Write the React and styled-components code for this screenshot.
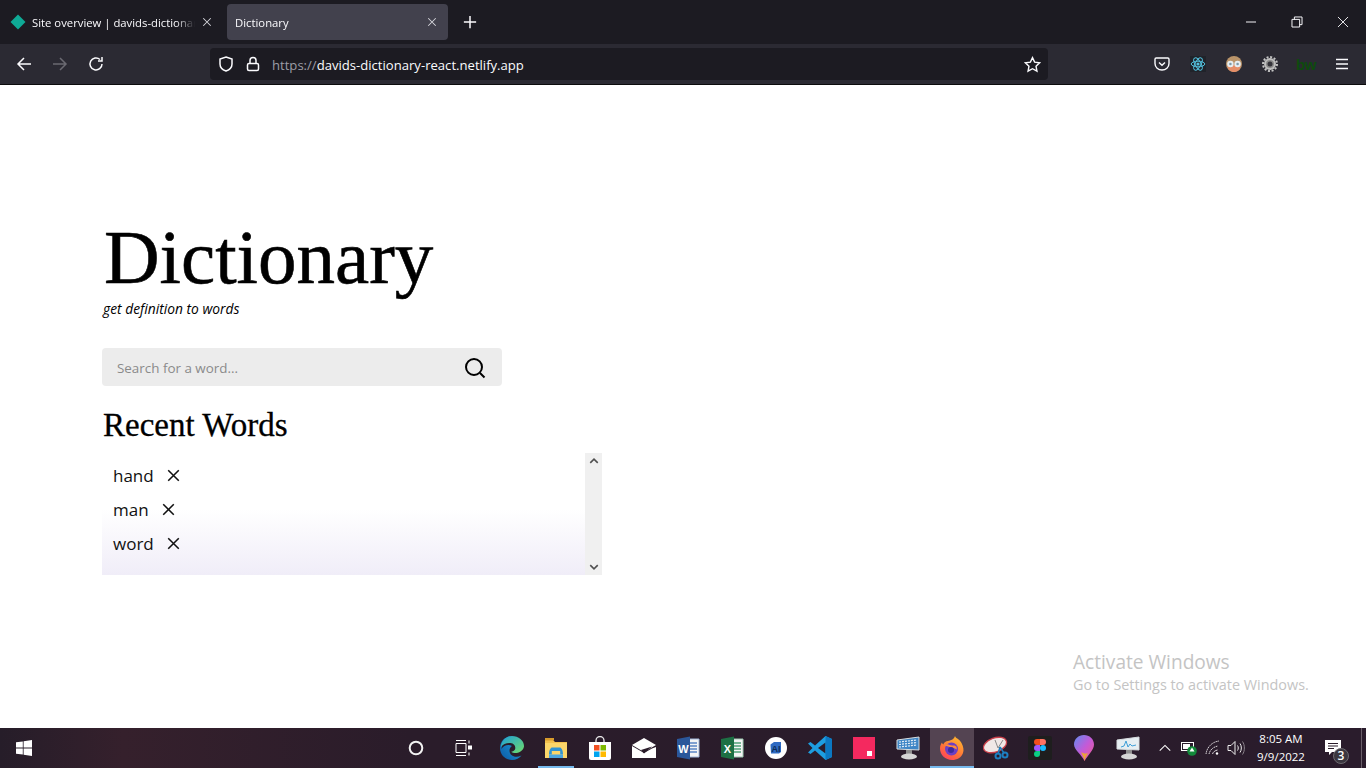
import React from 'react';
import styled, { createGlobalStyle } from 'styled-components';

const GlobalStyle = createGlobalStyle`
  html, body {
    margin: 0;
    padding: 0;
    height: 100%;
    overflow: hidden;
    background: #fff;
    font-family: "Open Sans", "Liberation Sans", sans-serif;
  }
`;

const Page = styled.div`
  width: 1366px;
  height: 768px;
  display: flex;
  flex-direction: column;
  position: relative;
  overflow: hidden;
`;

/* browser chrome */
const TabBar = styled.div`
  height: 44px;
  flex: none;
  background: #1c1b22;
  display: flex;
  align-items: flex-start;
  padding-top: 4px;
  box-sizing: border-box;
`;

const Tab = styled.div`
  width: ${(props) => props.$width}px;
  height: 36px;
  padding: 0 ${(props) => props.$padRight}px 0 ${(props) => props.$padLeft}px;
  box-sizing: border-box;
  display: flex;
  align-items: center;
  gap: 6px;
  border-radius: 4px;
  background: ${(props) => (props.$active ? '#42414d' : 'transparent')};
  color: #fbfbfe;
  font-size: 11.3px;
`;

const TabTitle = styled.span`
  flex: 1;
  overflow: hidden;
  white-space: nowrap;
  -webkit-mask-image: linear-gradient(to right, #000 88%, transparent 100%);
  mask-image: linear-gradient(to right, #000 88%, transparent 100%);
`;

const NewTab = styled.div`
  width: 44px;
  height: 36px;
  display: flex;
  align-items: center;
  justify-content: center;
`;

const WindowControls = styled.div`
  margin-left: auto;
  margin-top: -4px;
  display: flex;
`;

const WindowButton = styled.div`
  width: 46px;
  height: 44px;
  display: flex;
  align-items: center;
  justify-content: center;
`;

const NavBar = styled.div`
  height: 41px;
  flex: none;
  box-sizing: border-box;
  background: #2b2a33;
  border-bottom: 1px solid #0c0c0d;
  display: flex;
  align-items: center;
`;

const NavButton = styled.div`
  width: 36px;
  height: 32px;
  display: flex;
  align-items: center;
  justify-content: center;
  flex: none;
`;

const NavLeft = styled.div`
  display: flex;
  padding-left: 6px;
  width: 210px;
  box-sizing: border-box;
  flex: none;
`;

const UrlBar = styled.div`
  width: 838px;
  height: 32px;
  flex: none;
  background: #1c1b22;
  border-radius: 4px;
  display: flex;
  align-items: center;
  padding: 0 7px 0 8px;
  box-sizing: border-box;
  color: #fbfbfe;
  font-size: 13.1px;
  gap: 11px;
`;

const UrlText = styled.span`
  flex: 1;
  padding-top: 2px;
  white-space: nowrap;
`;

const UrlScheme = styled.span`
  color: #9d9da6;
`;

const NavRight = styled.div`
  margin-left: auto;
  padding-right: 6px;
  display: flex;
`;

const BwBadge = styled.span`
  font-family: "Liberation Sans", sans-serif;
  font-weight: 700;
  font-size: 15px;
  color: #0d4a0d;
  letter-spacing: -0.5px;
`;

/* page content */
const Content = styled.main`
  flex: 1;
  padding: 129px 0 0 102px;
  background: #fff;
  min-height: 0;
`;

const Title = styled.h1`
  margin: 0;
  padding-left: 2px;
  font-family: "Liberation Serif", serif;
  font-weight: 400;
  font-size: 77px;
  line-height: 86px;
  color: #000;
  -webkit-text-stroke: 0.6px #000;
`;

const Tagline = styled.p`
  margin: 0;
  padding-left: 1px;
  font-style: italic;
  font-size: 13.8px;
  line-height: 18px;
  color: #000;
`;

const SearchBox = styled.form`
  margin-top: 30px;
  width: 400px;
  height: 38px;
  background: #ececec;
  border-radius: 4px;
  display: flex;
  align-items: center;
  padding: 0 15px;
  box-sizing: border-box;
`;

const SearchInput = styled.input`
  flex: 1;
  border: 0;
  outline: 0;
  background: transparent;
  font-family: "Open Sans", sans-serif;
  font-size: 13.4px;
  color: #333;
  padding: 1px 0 0;

  &::placeholder {
    color: #8a8a8a;
    opacity: 1;
  }
`;

const SectionTitle = styled.h2`
  margin: 20px 0 0;
  padding-left: 1px;
  font-family: "Liberation Serif", serif;
  font-weight: 400;
  font-size: 33px;
  line-height: 38px;
  color: #000;
  -webkit-text-stroke: 0.3px #000;
`;

const RecentPanel = styled.div`
  margin-top: 9px;
  width: 500px;
  height: 122px;
  display: flex;
  background: linear-gradient(to bottom, #fff 0%, #fff 46%, #f0edf8 100%);
`;

const RecentList = styled.ul`
  flex: 1;
  margin: 0;
  padding: 5px 0 0 11px;
  list-style: none;
`;

const RecentItem = styled.li`
  height: 34px;
  display: flex;
  align-items: center;
  gap: 13px;
  font-size: 17px;
  color: #111;
`;

const Scrollbar = styled.div`
  width: 17px;
  background: #f0f0f0;
  display: flex;
  flex-direction: column;
  justify-content: space-between;
  align-items: center;
  padding: 3px 0;
  box-sizing: border-box;
`;

const ActivateNote = styled.div`
  position: absolute;
  left: 1073px;
  top: 650px;
  color: #c4c4c4;
  font-size: 14.4px;
  line-height: 22px;
`;

const ActivateTitle = styled.div`
  font-size: 19.1px;
  line-height: 24px;
`;

/* windows taskbar */
const Taskbar = styled.footer`
  height: 40px;
  flex: none;
  background: linear-gradient(to right, #261d29 0%, #35202c 9%, #2a1c2a 30%, #2a1c2c 100%);
  display: flex;
  align-items: center;
  color: #fff;
`;

const StartButton = styled.div`
  width: 48px;
  height: 40px;
  display: flex;
  align-items: center;
  justify-content: center;
`;

const TaskIcons = styled.div`
  margin-left: 344px;
  display: flex;
`;

const TaskSlot = styled.div`
  width: ${(props) => props.$width || 44}px;
  height: 40px;
  margin-right: ${(props) => props.$after || 0}px;
  position: relative;
  display: flex;
  align-items: center;
  justify-content: center;
  background: ${(props) => (props.$active ? '#544452' : 'transparent')};

  &::after {
    content: '';
    display: ${(props) => (props.$running ? 'block' : 'none')};
    position: absolute;
    left: ${(props) => (props.$active ? 0 : 4)}px;
    right: ${(props) => (props.$active ? 0 : 4)}px;
    bottom: 0;
    height: 2px;
    background: #76b9ed;
  }
`;

const Tray = styled.div`
  margin-left: auto;
  display: flex;
  align-items: center;
  height: 40px;
`;

const TrayIcon = styled.div`
  width: ${(props) => props.$width}px;
  display: flex;
  justify-content: center;
`;

const Clock = styled.div`
  width: 68px;
  text-align: center;
  font-size: 11.5px;
  line-height: 18px;
  color: #fff;
`;

const NotificationButton = styled.div`
  width: 46px;
  height: 40px;
  padding-left: 10px;
  box-sizing: border-box;
  position: relative;
  display: flex;
  align-items: center;
`;

const NotificationCount = styled.span`
  position: absolute;
  left: 18px;
  top: 20px;
  width: 16px;
  height: 16px;
  border-radius: 50%;
  background: #3b3740;
  border: 1px solid #6d6a70;
  box-sizing: border-box;
  font-size: 12px;
  font-weight: 600;
  line-height: 14px;
  text-align: center;
  color: #fff;
`;

const ShowDesktop = styled.div`
  width: 5px;
  height: 40px;
  border-left: 1px solid #6a5f69;
  box-sizing: border-box;
`;

/* drawings */
const Line = ({ size = 16, d, color = '#fbfbfe', width = 1.5 }) => (
  <svg width={size} height={size} viewBox="0 0 16 16" fill="none" stroke={color} strokeWidth={width} style={{ flex: 'none' }}>
    <path d={d} />
  </svg>
);

const CloseX = ({ color }) => <Line size={12} d="M3 3l10 10M13 3L3 13" color={color || '#d6d6dc'} width={1.4} />;

const Diamond = () => (
  <svg width="16" height="16" viewBox="0 0 16 16" style={{ flex: 'none' }}>
    <path d="M8 .5L15.500 8 8 15.500.5 8z" fill="#0faa96" />
  </svg>
);

const ReactAtom = () => (
  <svg width="16" height="16" viewBox="0 0 16 16" fill="none" stroke="#53c1de" strokeWidth="1">
    <rect width="16" height="16" fill="#20232a" stroke="none" />
    <circle cx="8" cy="8" r="1.600" fill="#53c1de" stroke="none" />
    <ellipse cx="8" cy="8" rx="6.800" ry="2.800" />
    <ellipse cx="8" cy="8" rx="6.800" ry="2.800" transform="rotate(60 8 8)" />
    <ellipse cx="8" cy="8" rx="6.800" ry="2.800" transform="rotate(120 8 8)" />
  </svg>
);

const Avatar = () => (
  <svg width="16" height="16" viewBox="0 0 16 16">
    <circle cx="8" cy="8" r="8" fill="#b9946a" />
    <path d="M1.500 9c0 5 3.500 7 6.500 7s6.500-2 6.500-7z" fill="#e58e68" />
    <circle cx="4.400" cy="8" r="3.200" fill="#e6eef2" />
    <circle cx="11.600" cy="8" r="3.200" fill="#e6eef2" />
    <circle cx="4.400" cy="8" r="1.300" fill="#7d9aa8" />
    <circle cx="11.600" cy="8" r="1.300" fill="#7d9aa8" />
  </svg>
);

const Gear = () => (
  <svg width="16" height="16" viewBox="0 0 16 16">
    <circle cx="8" cy="8" r="7" fill="none" stroke="#c4c4c4" strokeWidth="2" strokeDasharray="2 1.660" />
    <circle cx="8" cy="8" r="6" fill="#bdbdbd" />
    <circle cx="8" cy="8" r="4" fill="#8a8a8a" />
    <circle cx="8" cy="8" r="2.500" fill="#34333a" />
  </svg>
);

const Pocket = () => (
  <svg width="16" height="16" viewBox="0 0 16 16" fill="none" stroke="#fbfbfe" strokeWidth="1.400">
    <path d="M2.200 2h11.600c.7 0 1.200.5 1.200 1.200v4.300c0 3.800-3.200 6.500-7 6.500s-7-2.700-7-6.500V3.200C1 2.500 1.500 2 2.200 2z" />
    <path d="M5 6.500l3 2.800 3-2.800" />
  </svg>
);

const WinLogo = () => (
  <svg width="16" height="16" viewBox="0 0 16 16" fill="#fff">
    <path d="M0 2.300l6.800-.9v6.200H0zM7.600 1.300L16 0v7.600H7.600zM0 8.400h6.800v6.200L0 13.700zM7.600 8.400H16V16l-8.400-1.200z" />
  </svg>
);

const Cortana = () => (
  <svg width="16" height="16" viewBox="0 0 16 16" fill="none">
    <circle cx="8" cy="8" r="6.300" stroke="#f2f2f2" strokeWidth="2" />
  </svg>
);

const TaskView = () => (
  <svg width="18" height="16" viewBox="0 0 18 16" fill="none" stroke="#fff">
    <path d="M1 .5h10M1 15.500h10M1 3.500V12.500h10V3.500zM14 .5v3M14 12.500v3" />
    <rect x="13.500" y="6" width="3" height="3" fill="#fff" />
  </svg>
);

const Edge = () => (
  <svg width="24" height="24" viewBox="0 0 24 24">
    <defs>
      <linearGradient id="edgeA" x1="0" y1="1" x2="1" y2="0">
        <stop offset="0" stopColor="#0c59a4" />
        <stop offset="1" stopColor="#1fa4e0" />
      </linearGradient>
      <linearGradient id="edgeB" x1="0" y1="0" x2="1" y2="1">
        <stop offset="0" stopColor="#1f9fd8" />
        <stop offset="1" stopColor="#6fdc6a" />
      </linearGradient>
    </defs>
    <path d="M12 0C5 0 0 5.500 0 12c0 7 5.500 12 12 12 4 0 7.500-1.800 9.500-4.500-6 3-12 .5-12-5 0-2 1-3.500 2.500-4.500C8 8 3.500 9.500 1.500 13 2 6 7 1.500 12 0z" fill="url(#edgeA)" />
    <path d="M12 0C5.500 0 1 5.500 1 11c2-3 6-4.500 9.500-4 4 .5 5.500 3.500 4.500 6.500-1 2-4 2-3.500 2.500 2 1.500 6 1.500 9-.5 3-2 3.500-4.500 3.500-5.500C24 4.500 18.500 0 12 0z" fill="url(#edgeB)" />
  </svg>
);

const Explorer = () => (
  <svg width="22" height="20" viewBox="0 0 22 20">
    <path d="M0 2h8l2 2h12v16H0z" fill="#f2c14e" />
    <path d="M0 0h9v2.500H0z" fill="#d79b2c" />
    <path d="M0 5h22v15H0z" fill="#fbd66a" />
    <path d="M4 16.500c0-5 2-7 3-7h8c1 0 3 2 3 7h-2.800v-3.500H6.800v3.500H4z" fill="#2f93d3" />
    <path d="M4 16.500h14V20H4z" fill="#4aa6e0" />
  </svg>
);

const Store = () => (
  <svg width="24" height="24" viewBox="0 0 24 24">
    <path d="M8 7V4.500a4 4 0 018 0V7" fill="none" stroke="#e8e8e8" strokeWidth="1.300" />
    <path d="M1 6h22v16a2 2 0 01-2 2H3a2 2 0 01-2-2z" fill="#fff" />
    <path d="M6 9h5.500v5.500H6z" fill="#f25022" />
    <path d="M12.500 9H18v5.500h-5.500z" fill="#7fba00" />
    <path d="M6 15.500h5.500V21H6z" fill="#00a4ef" />
    <path d="M12.500 15.500H18V21h-5.500z" fill="#ffb900" />
  </svg>
);

const Mail = () => (
  <svg width="24" height="20" viewBox="0 0 24 20">
    <path d="M0 7L12 0l12 7-12 7z" fill="#fff" />
    <path d="M0 8l12 7 8-4.500L24 9v11H0z" fill="#fff" />
    <path d="M9 12l11-3.500-8 7z" fill="#2a1c2a" />
  </svg>
);

const OfficeDoc = ({ letter, dark, mid, light }) => (
  <svg width="24" height="24" viewBox="0 0 24 24">
    <path d="M8 3h15v18H8z" fill="#f4f4f4" stroke={light} />
    <path d="M13 7h8M13 10h8M13 13h8M13 16h8" stroke={mid} strokeWidth="1.500" />
    <path d="M1 3l13-2.500v23L1 21z" fill={dark} />
    <text x="7.500" y="16.500" fontFamily="Liberation Sans, sans-serif" fontSize="11" fontWeight="700" fill="#fff" textAnchor="middle">{letter}</text>
  </svg>
);

const Studio = () => (
  <svg width="22" height="22" viewBox="0 0 22 22">
    <circle cx="11" cy="11" r="11" fill="#fff" />
    <path d="M5.500 7.500L9 5h7v10l-2 1.500H6z" fill="#2e6ac2" />
    <text x="11" y="15" fontFamily="Liberation Sans, sans-serif" fontSize="9" fontWeight="700" fill="#0d2b55" textAnchor="middle">AI</text>
  </svg>
);

const VsCode = () => (
  <svg width="24" height="24" viewBox="0 0 24 24">
    <path d="M17.500 0L24 3v18l-6.500 3L7 14.500l-4.500 3.500L0 16.500 4.500 12 0 7.500 2.500 6 7 9.500z" fill="#1e9ee0" />
    <path d="M17.500 6.500L10 12l7.500 5.500z" fill="#2a1c2a" />
    <path d="M17.500 0L24 3v18l-6.500 3z" fill="#0b78c2" />
  </svg>
);

const RedSquare = () => (
  <svg width="22" height="22" viewBox="0 0 22 22">
    <rect width="22" height="22" fill="#f4295f" />
    <rect x="14" y="14" width="5" height="5" fill="#fff" />
  </svg>
);

const Monitor = ({ graph }) => (
  <svg width="24" height="24" viewBox="0 0 24 24">
    <path d="M1 4l22-3v13L1 13z" fill={graph ? '#e6eef2' : '#3f86c6'} stroke="#d8dde0" />
    {graph ? (
      <path d="M5 11l3-1 2-5 2 6 2-3 2 2 4-1" fill="none" stroke="#3f9fd8" />
    ) : (
      <path d="M3 6l18-2M3 8.500l18-2M3 11l18-2" stroke="#e4eef7" strokeWidth="1.200" strokeDasharray="2 1" />
    )}
    <path d="M10 14h6v4h-6z" fill="#8f8f8f" />
    <ellipse cx="13" cy="20.500" rx="8" ry="3" fill="#d6d6d6" />
  </svg>
);

const Firefox = () => (
  <svg width="24" height="24" viewBox="0 0 24 24">
    <defs>
      <linearGradient id="foxA" x1="0.800" y1="0" x2="0.200" y2="1">
        <stop offset="0" stopColor="#ffbd2e" />
        <stop offset="0.600" stopColor="#ff7139" />
        <stop offset="1" stopColor="#ff3f5e" />
      </linearGradient>
    </defs>
    <path d="M15 0c1 3 4 2 6.500 7 2 4 2.500 7 1.500 10-1.500 4.500-6 7-11 7C5.500 24 0 19 0 12.500 0 10 .8 8 2 6.500c.3 1 .6 1.500 1.300 2C4 6.500 6 5 8 5c2.500-.5 6-1.500 7-5z" fill="url(#foxA)" />
    <circle cx="11.500" cy="13" r="6.500" fill="#6d3fc4" />
    <path d="M5 9c3-2 5 1 8 .5 3-.5 4.500 2 3.500 4C14 11 9 12 5 9z" fill="#ff8a3a" />
    <circle cx="11" cy="14" r="3" fill="#3d2a9c" />
  </svg>
);

const Snip = () => (
  <svg width="26" height="24" viewBox="0 0 26 24">
    <ellipse cx="12" cy="9" rx="12" ry="7" fill="#f0e8e6" stroke="#c9404a" strokeWidth="1.300" transform="rotate(-20 12 9)" />
    <path d="M12 4l3 8 5-8" fill="none" stroke="#8a8a8a" />
    <circle cx="15" cy="20" r="2.500" fill="none" stroke="#1d7fc0" strokeWidth="2" />
    <circle cx="22" cy="19" r="2.500" fill="none" stroke="#1d7fc0" strokeWidth="2" />
    <path d="M15 18l2-7M21 17l-4-6" stroke="#1d7fc0" strokeWidth="1.500" />
  </svg>
);

const Figma = () => (
  <svg width="24" height="24" viewBox="0 0 24 24">
    <rect width="24" height="24" rx="2" fill="#1e1e1e" />
    <path d="M12 3H9a3 3 0 000 6h3z" fill="#f24e1e" />
    <path d="M12 3h3a3 3 0 010 6h-3z" fill="#ff7262" />
    <path d="M12 9H9a3 3 0 000 6h3z" fill="#a259ff" />
    <circle cx="15" cy="12" r="3" fill="#1abcfe" />
    <path d="M9 15h3v3a3 3 0 11-3-3z" fill="#0acf83" />
  </svg>
);

const Balloon = () => (
  <svg width="20" height="26" viewBox="0 0 20 26">
    <defs>
      <linearGradient id="ballA" x1="0" y1="0" x2="1" y2="1">
        <stop offset="0" stopColor="#5f8df0" />
        <stop offset="0.500" stopColor="#c35ad8" />
        <stop offset="1" stopColor="#f25a8c" />
      </linearGradient>
    </defs>
    <path d="M10 0c5.500 0 10 4 10 9.500C20 15 14 20 10.500 26 8 20 0 15 0 9.500 0 4 4.500 0 10 0z" fill="url(#ballA)" />
    <path d="M7 17c1 3 3 5 3.500 9 .5-3 2-5 3.500-8-2 1-5 .5-7-1z" fill="#e8a23a" />
  </svg>
);

const TrayChevron = () => <Line size={14} d="M2 11l6-6 6 6" color="#fff" width={1.2} />;

const Battery = () => (
  <svg width="16" height="16" viewBox="0 0 16 16">
    <rect x=".5" y="2.500" width="12" height="8" fill="none" stroke="#fff" />
    <rect x="2" y="4" width="7" height="5" fill="#fff" />
    <circle cx="11" cy="11" r="4.800" fill="#128a3a" />
    <path d="M11 7.500l2.500 4h-5z" fill="#fff" />
  </svg>
);

const Wifi = () => (
  <svg width="16" height="16" viewBox="0 0 16 16" fill="none" stroke="#d8d4d8">
    <path d="M1 14C2 7 7 2 14 1" strokeDasharray="1.500 .6" />
    <path d="M4 14c1-4 4-7 9-8" strokeDasharray="1.500 .6" />
    <path d="M7.500 14c.6-2 2.500-3.500 5-4" />
    <circle cx="12" cy="13.500" r="1.200" fill="#fff" stroke="none" />
  </svg>
);

const Speaker = () => (
  <svg width="18" height="16" viewBox="0 0 18 16" fill="none" stroke="#eee">
    <path d="M1 5.500h3l4-4v13l-4-4H1z" />
    <path d="M10.500 5.500c1 1.500 1 3.500 0 5M13 3.500c1.800 2.500 1.800 6.500 0 9" />
    <path d="M15.500 1.500c2.500 3.500 2.500 9.500 0 13" stroke="#8c858c" />
  </svg>
);

const Bubble = () => (
  <svg width="16" height="16" viewBox="0 0 16 16">
    <path d="M0 0h16v12H7l-3 3v-3H0z" fill="#fff" />
    <path d="M3 3.500h10M3 6h10M3 8.500h6" stroke="#2a1c2a" />
  </svg>
);

const taskApps = [
  { id: 'cortana', icon: <Cortana />, width: 48 },
  { id: 'taskview', icon: <TaskView />, width: 48, after: 2 },
  { id: 'edge', icon: <Edge /> },
  { id: 'explorer', icon: <Explorer />, running: true },
  { id: 'store', icon: <Store /> },
  { id: 'mail', icon: <Mail /> },
  { id: 'word', icon: <OfficeDoc letter="W" dark="#2b579a" mid="#5b85c4" light="#9fb6da" /> },
  { id: 'excel', icon: <OfficeDoc letter="X" dark="#1d7044" mid="#4fa177" light="#9ccab1" /> },
  { id: 'studio', icon: <Studio /> },
  { id: 'vscode', icon: <VsCode /> },
  { id: 'red', icon: <RedSquare /> },
  { id: 'osk', icon: <Monitor /> },
  { id: 'firefox', icon: <Firefox />, running: true, active: true },
  { id: 'snip', icon: <Snip /> },
  { id: 'figma', icon: <Figma /> },
  { id: 'paint', icon: <Balloon /> },
  { id: 'perf', icon: <Monitor graph /> },
];

const recentWords = ['hand', 'man', 'word'];

const App = () => {
  return (
    <Page>
      <GlobalStyle />
      <TabBar>
        <Tab $width={227} $padLeft={10} $padRight={14}>
          <Diamond />
          <TabTitle>Site overview | davids-dictionary</TabTitle>
          <CloseX />
        </Tab>
        <Tab $width={221} $active $padLeft={8} $padRight={10}>
          <TabTitle>Dictionary</TabTitle>
          <CloseX />
        </Tab>
        <NewTab>
          <Line size={14} d="M8 1v14M1 8h14" width={1.7} />
        </NewTab>
        <WindowControls>
          <WindowButton>
            <Line size={12} d="M1.300 8h13.400" width={1.3} />
          </WindowButton>
          <WindowButton>
            <Line size={12} d="M1.300 4.500h10.200v10.200H1.300zM4.500 4.500V1.300h10.200v10.200h-3.200" width={1.3} />
          </WindowButton>
          <WindowButton>
            <Line size={12} d="M1.300 1.300l13.400 13.400M14.700 1.300L1.300 14.700" width={1.2} />
          </WindowButton>
        </WindowControls>
      </TabBar>
      <NavBar>
        <NavLeft>
          <NavButton>
            <Line d="M15 8H2M8 2L2 8l6 6" />
          </NavButton>
          <NavButton>
            <Line d="M1 8h13M8 2l6 6-6 6" color="#6b6a72" />
          </NavButton>
          <NavButton>
            <Line d="M14 8a6 6 0 11-2-4.500M14 1v4h-4" />
          </NavButton>
        </NavLeft>
        <UrlBar>
          <Line d="M8 1l6 2v5c0 3.500-3 6-6 7-3-1-6-3.500-6-7V3z" />
          <Line d="M4 7.500h8a1.500 1.500 0 011.500 1.500v4A1.500 1.500 0 0112 14.500H4A1.500 1.500 0 012.500 13V9A1.500 1.500 0 014 7.500zM5 7.500V4.500a3 3 0 016 0v3" />
          <UrlText>
            <UrlScheme>https://</UrlScheme>davids-dictionary-react.netlify.app
          </UrlText>
          <Line size={17} d="M8 1.500l2 4.300 4.700.6-3.400 3.200.9 4.700L8 12l-4.200 2.300.9-4.700L1.300 6.400 6 5.800z" width={1.3} />
        </UrlBar>
        <NavRight>
          <NavButton><Pocket /></NavButton>
          <NavButton><ReactAtom /></NavButton>
          <NavButton><Avatar /></NavButton>
          <NavButton><Gear /></NavButton>
          <NavButton><BwBadge>bw</BwBadge></NavButton>
          <NavButton>
            <Line d="M2 3.500h12M2 8h12M2 12.500h12" width={1.4} />
          </NavButton>
        </NavRight>
      </NavBar>

      <Content>
        <Title>Dictionary</Title>
        <Tagline>get definition to words</Tagline>
        <SearchBox onSubmit={(e) => e.preventDefault()}>
          <SearchInput placeholder="Search for a word..." />
          <svg width="24" height="24" viewBox="0 0 24 24" fill="none" stroke="#000" strokeWidth="2">
            <circle cx="11" cy="12" r="8" />
            <path d="M17 18l4.500 4.500" />
          </svg>
        </SearchBox>
        <SectionTitle>Recent Words</SectionTitle>
        <RecentPanel>
          <RecentList>
            {recentWords.map((word) => (
              <RecentItem key={word}>
                {word}
                <Line size={13} d="M1.500 1.500l13 13M14.500 1.500l-13 13" color="#111" width={1.9} />
              </RecentItem>
            ))}
          </RecentList>
          <Scrollbar>
            <Line size={10} d="M2 11l6-6 6 6" color="#505050" width={2.5} />
            <Line size={10} d="M2 5l6 6 6-6" color="#505050" width={2.5} />
          </Scrollbar>
        </RecentPanel>
      </Content>

      <ActivateNote>
        <ActivateTitle>Activate Windows</ActivateTitle>
        Go to Settings to activate Windows.
      </ActivateNote>

      <Taskbar>
        <StartButton><WinLogo /></StartButton>
        <TaskIcons>
          {taskApps.map((app) => (
            <TaskSlot key={app.id} $width={app.width} $after={app.after} $running={app.running} $active={app.active}>
              {app.icon}
            </TaskSlot>
          ))}
        </TaskIcons>
        <Tray>
          <TrayIcon $width={24}><TrayChevron /></TrayIcon>
          <TrayIcon $width={24}><Battery /></TrayIcon>
          <TrayIcon $width={24}><Wifi /></TrayIcon>
          <TrayIcon $width={22}><Speaker /></TrayIcon>
          <Clock>
            8:05 AM
            <br />
            9/9/2022
          </Clock>
          <NotificationButton>
            <Bubble />
            <NotificationCount>3</NotificationCount>
          </NotificationButton>
          <ShowDesktop />
        </Tray>
      </Taskbar>
    </Page>
  );
};

export default App;
